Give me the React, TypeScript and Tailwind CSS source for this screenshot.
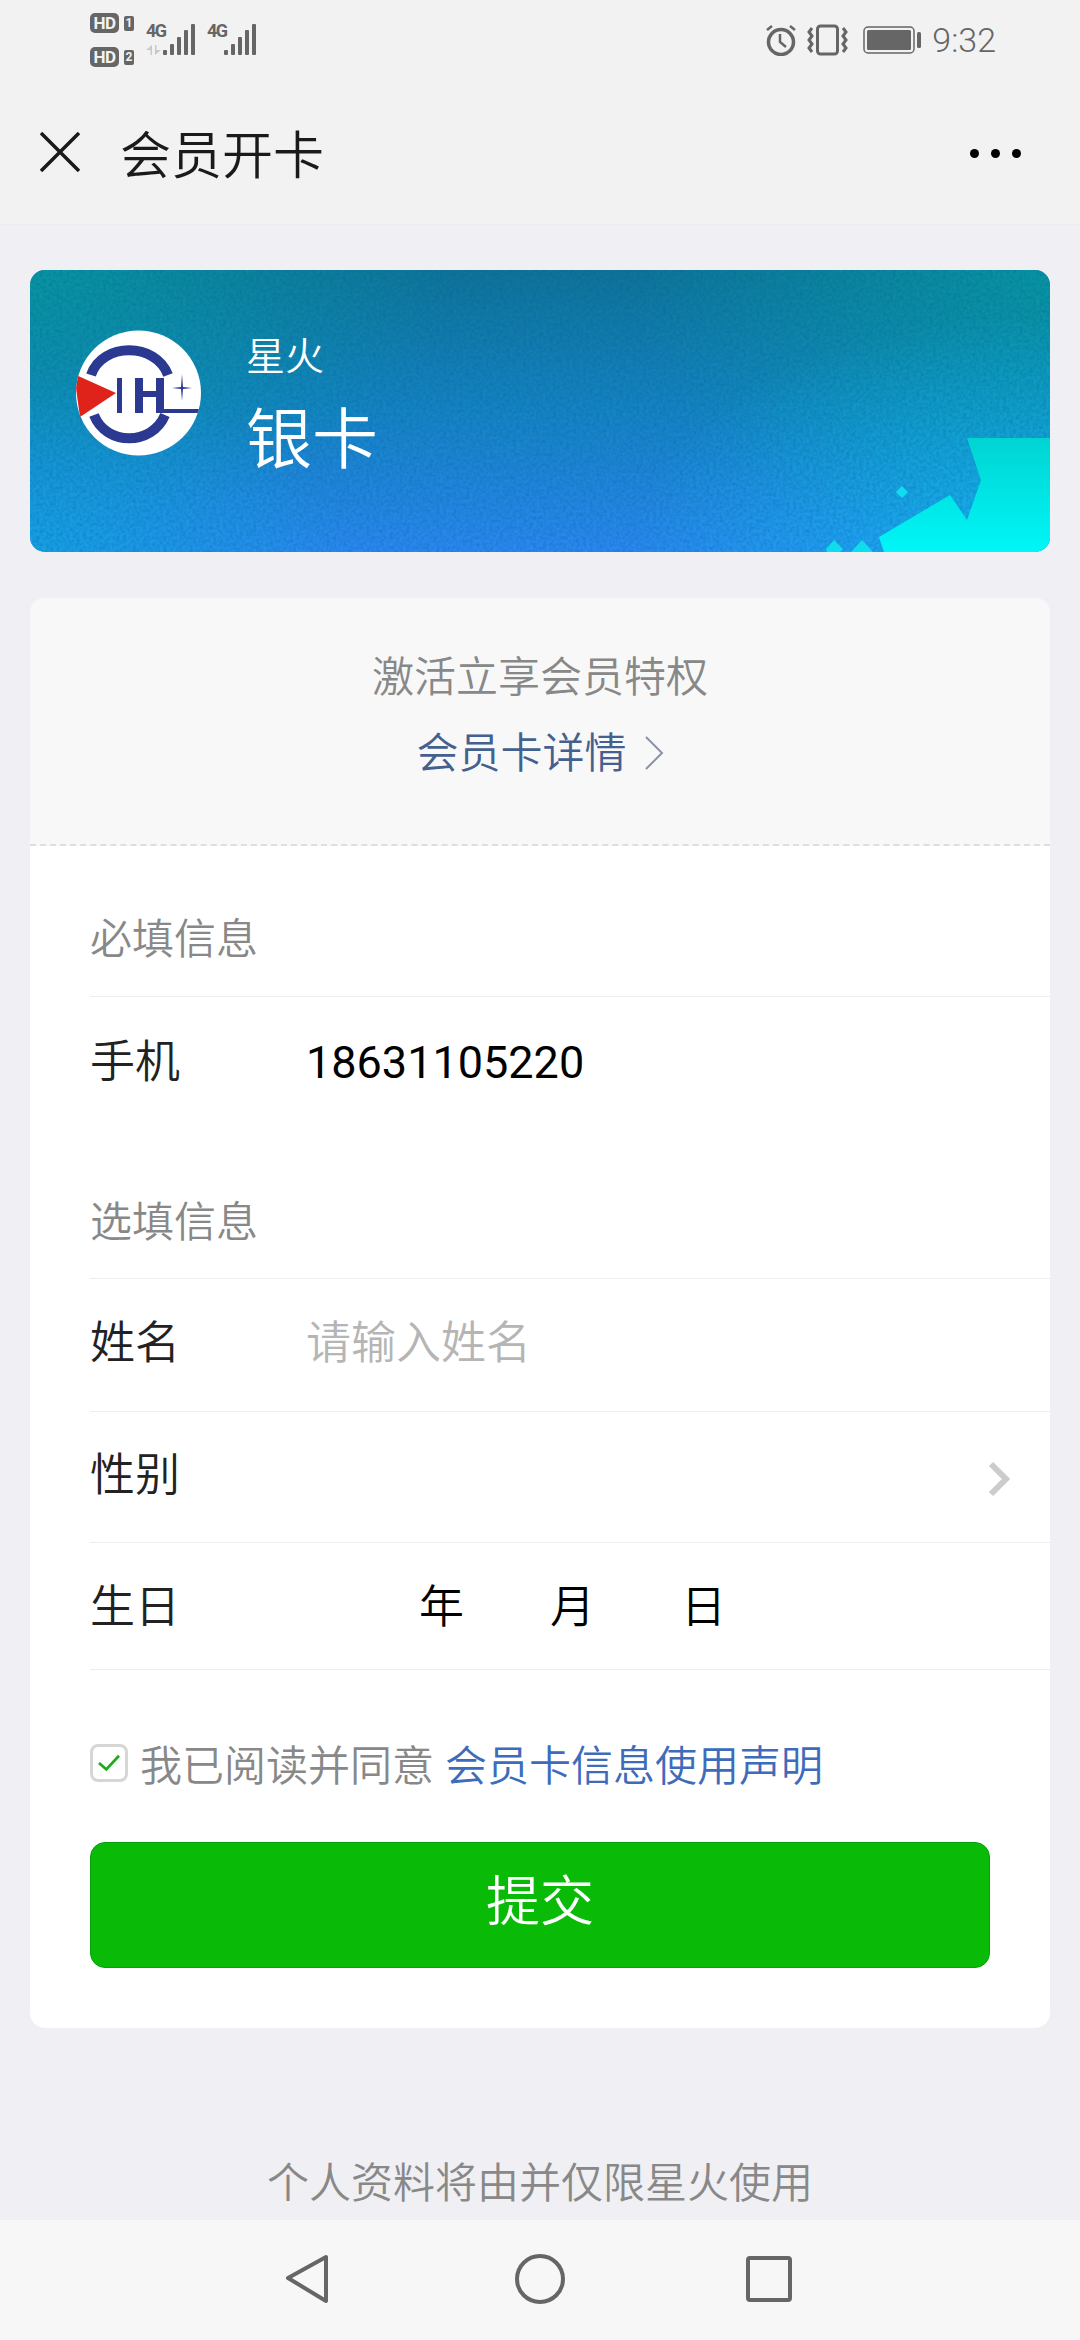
import React from "react";

const cjk = "font-['Noto_Sans_CJK_SC','Roboto',sans-serif] font-[350]";

function HdTile({ n }: { n: string }) {
  return (
    <div className="flex items-center gap-[5px] h-[19px]">
      <span className="flex items-center justify-center w-[29px] h-[20px] rounded-[5px] bg-[#666666] text-[#f2f2f2] text-[17px] font-bold leading-none tracking-[-0.5px] font-['Roboto',sans-serif]">HD</span>
      <span className="flex items-center justify-center w-[10px] h-[15px] rounded-[2px] bg-[#666666] text-[#f2f2f2] text-[12px] font-bold leading-none font-['Roboto',sans-serif]">{n}</span>
    </div>
  );
}

function Signal({ arrows }: { arrows?: boolean }) {
  return (
    <div className="flex items-end h-[31px]">
      <div className="relative w-[17px] h-[31px]">
        <span className="absolute left-0 top-[-2px] text-[18px] leading-[18px] font-bold text-[#666666] font-['Roboto',sans-serif] tracking-[-1.5px]">4G</span>
        {arrows && (
          <svg className="absolute left-0 bottom-0" width="16" height="10" viewBox="0 0 16 10" fill="#c9c9c9">
            <path d="M6 0v10H4.500V5L0 5zM9 0v10L15 5h-4.500V0z" />
          </svg>
        )}
      </div>
      <svg width="33" height="31" viewBox="0 0 33 31" fill="#666666">
        <rect x="0" y="26" width="4" height="5" rx="1" />
        <rect x="7" y="20" width="4" height="11" rx="1" />
        <rect x="14" y="13" width="4" height="18" rx="1" />
        <rect x="21" y="6" width="4" height="25" rx="1" />
        <rect x="28" y="0" width="4" height="31" rx="1" />
      </svg>
    </div>
  );
}

function StatusBar() {
  return (
    <div className="flex items-center justify-between h-[80px] pl-[90px] pr-[84px]">
      <div className="flex items-center">
        <div className="flex flex-col gap-[15px]">
          <HdTile n="1" />
          <HdTile n="2" />
        </div>
        <div className="flex items-center gap-[11px] ml-[12px] mt-[-1px]">
          <Signal arrows />
          <Signal />
        </div>
      </div>
      <div className="flex items-center">
        <svg width="32" height="32" viewBox="0 0 32 32" fill="none" stroke="#666666" strokeWidth="3.500">
          <circle cx="16" cy="18" r="12.500" />
          <path d="M15 10v8l6 5" strokeWidth="2.500" />
          <path d="M2 6l5-4M30 6l-5-4" strokeWidth="2.500" />
        </svg>
        <svg className="ml-[10px]" width="41" height="32" viewBox="0 0 41 32" fill="none" stroke="#666666" strokeWidth="3">
          <rect x="10.500" y="2" width="20" height="28" rx="3" />
          <path d="M5 4l-3 4 3 4-3 4 3 4-3 4 3 4M36 4l3 4-3 4 3 4-3 4 3 4-3 4" />
        </svg>
        <svg className="ml-[15px]" width="58" height="28" viewBox="0 0 58 28" fill="none">
          <rect x="1" y="1" width="50" height="26" rx="4" stroke="#666666" strokeWidth="1.500" />
          <rect x="4" y="4" width="44" height="20" rx="1.500" fill="#666666" />
          <rect x="54" y="6" width="4" height="16" rx="1.500" fill="#666666" />
        </svg>
        <span className="ml-[11px] text-[34px] leading-none font-light text-[#666666] font-['Roboto',sans-serif]">9:32</span>
      </div>
    </div>
  );
}

function TitleBar() {
  return (
    <div className={`flex items-center h-[145px] pl-[40px] pr-[60px] border-b border-[#ededf0] ${cjk}`}>
      <svg width="40" height="40" viewBox="0 0 40 40" stroke="#1a1a1a" strokeWidth="3.500">
        <path d="M1 1l38 38M39 1L1 39" />
      </svg>
      <span className="ml-[40px] text-[51px] leading-none text-[#1a1a1a]">会员开卡</span>
      <div className="ml-auto flex gap-[12px] mr-[-1px] mt-[2px]">
        <span className="w-[9px] h-[9px] rounded-full bg-black" />
        <span className="w-[9px] h-[9px] rounded-full bg-black" />
        <span className="w-[9px] h-[9px] rounded-full bg-black" />
      </div>
    </div>
  );
}

function Logo() {
  return (
    <svg className="shrink-0" width="125" height="126" viewBox="0 0 125 126">
      <defs>
        <clipPath id="logoClip">
          <circle cx="62.500" cy="63" r="62.500" />
        </clipPath>
      </defs>
      <circle cx="62.500" cy="63" r="62.500" fill="#ffffff" />
      <g clipPath="url(#logoClip)">
        <path d="M15 45C26 12 80 12 92 45" fill="none" stroke="#2b3990" strokeWidth="10" />
        <path d="M18 85C30 116 76 116 89 85" fill="none" stroke="#2b3990" strokeWidth="10" />
        <rect x="41" y="48" width="5" height="35" fill="#2b3990" />
        <rect x="59" y="48" width="8" height="35" fill="#2b3990" />
        <rect x="80" y="48" width="8" height="35" fill="#2b3990" />
        <rect x="59" y="61" width="27" height="6" fill="#2b3990" />
        <rect x="80" y="79" width="45" height="4" fill="#2b3990" />
        <path d="M106 44l1 13 9 1-9 1-1 12-1-12-9-1 9-1z" fill="#2b3990" />
        <path d="M-2 44L40 63 4 87z" fill="#e0231a" />
      </g>
    </svg>
  );
}

function Banner() {
  return (
    <div className={`relative overflow-hidden h-[282px] rounded-[15px] bg-[linear-gradient(180deg,#0f7498_0%,#1584c4_50%,#2b88f0_100%)] ${cjk}`}>
      <svg className="absolute inset-0" width="1020" height="282" viewBox="0 0 1020 282">
        <defs>
          <radialGradient id="tealLeft" cx="0" cy="0" r="1" gradientTransform="translate(0 0) scale(420 260)" gradientUnits="userSpaceOnUse">
            <stop offset="0" stopColor="#06a0a4" stopOpacity="0.75" />
            <stop offset="1" stopColor="#06a0a4" stopOpacity="0" />
          </radialGradient>
          <radialGradient id="tealRight" cx="0" cy="0" r="1" gradientTransform="translate(1020 0) scale(420 300)" gradientUnits="userSpaceOnUse">
            <stop offset="0" stopColor="#06a0a4" stopOpacity="0.75" />
            <stop offset="1" stopColor="#06a0a4" stopOpacity="0" />
          </radialGradient>
          <radialGradient id="skyLeft" cx="0" cy="0" r="1" gradientTransform="translate(0 282) scale(320 170)" gradientUnits="userSpaceOnUse">
            <stop offset="0" stopColor="#10a8e0" stopOpacity="0.8" />
            <stop offset="1" stopColor="#10a8e0" stopOpacity="0" />
          </radialGradient>
          <radialGradient id="cyanCorner" cx="0" cy="0" r="1" gradientTransform="translate(1020 282) scale(420 240)" gradientUnits="userSpaceOnUse">
            <stop offset="0" stopColor="#10c0f0" stopOpacity="0.8" />
            <stop offset="1" stopColor="#10c0f0" stopOpacity="0" />
          </radialGradient>
          <linearGradient id="spark" x1="0" y1="0" x2="0" y2="1">
            <stop offset="0" stopColor="#00d4d2" />
            <stop offset="1" stopColor="#00f6f8" />
          </linearGradient>
          <filter id="grain" x="0" y="0" width="100%" height="100%">
            <feTurbulence type="fractalNoise" baseFrequency="0.3" numOctaves="3" seed="4" />
            <feColorMatrix values="0 0 0 0 0  0 0 0 0 0.1  0 0 0 0 0.3  1.8 0 0 0 -0.6" />
          </filter>
        </defs>
        <rect width="1020" height="282" fill="url(#tealLeft)" />
        <rect width="1020" height="282" fill="url(#tealRight)" />
        <rect width="1020" height="282" fill="url(#skyLeft)" />
        <rect width="1020" height="282" fill="url(#cyanCorner)" />
        <rect width="1020" height="282" filter="url(#grain)" opacity="0.3" />
        <path d="M937 168H1020V282H854L849 267 920 225 937 250 951 210z" fill="url(#spark)" />
        <path d="M872 216l6 6-6 6-6-6zM804 270l9 9-3 3h-13l-1-3zM832 270l11 12h-22z" fill="#0fdcec" />
      </svg>
      <div className="relative flex items-center h-full pl-[46px] pb-[36px]">
        <Logo />
        <div className="ml-[45px] flex flex-col text-white mt-[13px]">
          <span className="text-[39px] leading-[46px]">星火</span>
          <span className="mt-[22px] text-[66px] leading-[72px]">银卡</span>
        </div>
      </div>
    </div>
  );
}

function Row({ label, children, h, pb }: { label: string; children?: React.ReactNode; h: string; pb: string }) {
  return (
    <div className={`flex items-center border-b border-[#eeeeee] ${h}`}>
      <span className={`w-[216px] shrink-0 text-[45px] leading-none text-[#222222] ${pb}`}>{label}</span>
      {children}
    </div>
  );
}

function MemberForm() {
  return (
    <div className={`mt-[46px] rounded-[15px] overflow-hidden bg-white ${cjk}`}>
      <div className="flex flex-col items-center h-[248px] pt-[49px] bg-[#f8f8f8] border-b-2 border-dashed border-[#dddee2]">
        <span className="text-[42px] leading-[54px] text-[#888888]">激活立享会员特权</span>
        <div className="flex items-center mt-[22px]">
          <span className="text-[42px] leading-[54px] text-[#44608f]">会员卡详情</span>
          <svg className="ml-[17px] mt-[6px]" width="20" height="34" viewBox="0 0 20 34" fill="none" stroke="#8a93a5" strokeWidth="2">
            <path d="M2 1l16 16L2 33" />
          </svg>
        </div>
      </div>

      <div className="pl-[60px]">
        <div className="flex items-center h-[151px] pt-[29px] border-b border-[#eeeeee] text-[42px] leading-none text-[#888888]">必填信息</div>
        <div className="flex items-center h-[130px]">
          <span className="w-[216px] shrink-0 pb-[7px] text-[45px] leading-none text-[#222222]">手机</span>
          <span className="text-[45px] leading-none font-normal text-black font-['Roboto',sans-serif]">18631105220</span>
        </div>
        <div className="flex items-center h-[152px] pt-[33px] border-b border-[#eeeeee] text-[42px] leading-none text-[#888888]">选填信息</div>
        <Row label="姓名" h="h-[133px]" pb="pb-[11px]">
          <span className="pb-[11px] text-[45px] leading-none text-[#b5b5b5]">请输入姓名</span>
        </Row>
        <Row label="性别" h="h-[131px]" pb="pb-[11px]">
          <svg className="ml-auto mr-[39px] mt-[3px]" width="24" height="36" viewBox="0 0 24 36" fill="none" stroke="#cccccc" strokeWidth="6">
            <path d="M4 3l15 15L4 33" />
          </svg>
        </Row>
        <Row label="生日" h="h-[127px]" pb="pb-[5px]">
          <div className="flex gap-[86px] pl-[113px] pb-[5px] text-[45px] leading-none text-black">
            <span>年</span>
            <span>月</span>
            <span>日</span>
          </div>
        </Row>
      </div>

      <div className="px-[60px] pt-[66px] pb-[60px]">
        <div className="flex items-center h-[54px]">
          <span className="flex items-center justify-center w-[38px] h-[38px] rounded-[8px] border-[3px] border-[#d6d6d6] shrink-0">
            <svg width="24" height="20" viewBox="0 0 26 22" fill="none" stroke="#1aad19" strokeWidth="3">
              <path d="M2 11l8 7L24 3" />
            </svg>
          </span>
          <span className="ml-[12px] text-[42px] leading-none text-[#888888]">我已阅读并同意</span>
          <span className="ml-[11px] text-[42px] leading-none text-[#3f6cba]">会员卡信息使用声明</span>
        </div>
        <button className="flex items-center justify-center w-full h-[126px] mt-[52px] rounded-[15px] border border-[#07a006] bg-[#09bb07] text-[54px] leading-none text-white pb-[14px]">提交</button>
      </div>
    </div>
  );
}

function NavBar() {
  return (
    <div className="flex items-center h-[120px] pl-[285px] bg-[#f7f7f7] pb-[3px]">
      <svg width="44" height="50" viewBox="0 0 44 50" fill="none" stroke="#666666" strokeWidth="4" strokeLinejoin="round">
        <path d="M41 3v44L3 24z" />
      </svg>
      <svg className="ml-[186px]" width="50" height="50" viewBox="0 0 50 50" fill="none" stroke="#666666" strokeWidth="4">
        <circle cx="25" cy="25" r="23" />
      </svg>
      <svg className="ml-[181px]" width="46" height="46" viewBox="0 0 46 46" fill="none" stroke="#666666" strokeWidth="4" strokeLinejoin="round">
        <rect x="2" y="2" width="42" height="42" rx="2" />
      </svg>
    </div>
  );
}

export default function App() {
  return (
    <div className="flex flex-col w-[1080px] h-[2340px] overflow-hidden bg-[#efeff4]">
      <div className="bg-[#f2f2f2]">
        <StatusBar />
        <TitleBar />
      </div>
      <div className="flex-1 px-[30px] pt-[45px]">
        <Banner />
        <MemberForm />
        <p className={`mt-[126px] text-center text-[42px] leading-[52px] text-[#888888] ${cjk}`}>个人资料将由并仅限星火使用</p>
      </div>
      <NavBar />
    </div>
  );
}
